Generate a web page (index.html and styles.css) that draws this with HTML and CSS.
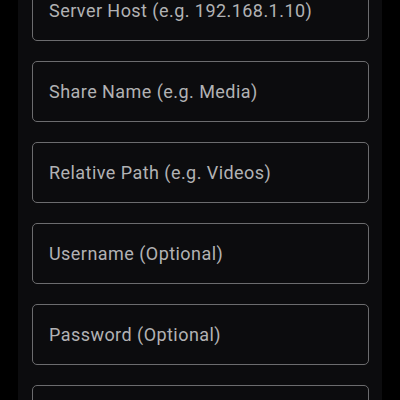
FILE: index.html
```html
<!DOCTYPE html>
<html>
<head>
<meta charset="utf-8">
<link rel="stylesheet" href="styles.css">
</head>
<body>
<div class="panel">
  <form class="fields">
    <div class="field">Server Host (e.g. 192.168.1.10)</div>
    <div class="field">Share Name (e.g. Media)</div>
    <div class="field">Relative Path (e.g. Videos)</div>
    <div class="field">Username (Optional)</div>
    <div class="field">Password (Optional)</div>
    <div class="field"></div>
  </form>
</div>
</body>
</html>
```
FILE: styles.css
```css
html, body {
  margin: 0;
  padding: 0;
  background: #000;
  height: 400px;
  overflow: hidden;
}
.panel {
  margin: 0 18px;
  height: 400px;
  background: #0c0c0e;
  padding: 0 13px 0 14px;
  overflow: hidden;
}
.fields {
  display: flex;
  flex-direction: column;
  gap: 20px;
  margin: -20px 0 0 0;
}
.field {
  box-sizing: border-box;
  height: 61px;
  flex: none;
  border: 1.5px solid #6c6c6e;
  border-radius: 5px;
  padding-left: 16px;
  display: flex;
  align-items: center;
  font-family: Roboto, "Noto Sans", sans-serif;
  font-size: 18px;
  letter-spacing: 0.45px;
  color: #b2b2b4;
}
```
